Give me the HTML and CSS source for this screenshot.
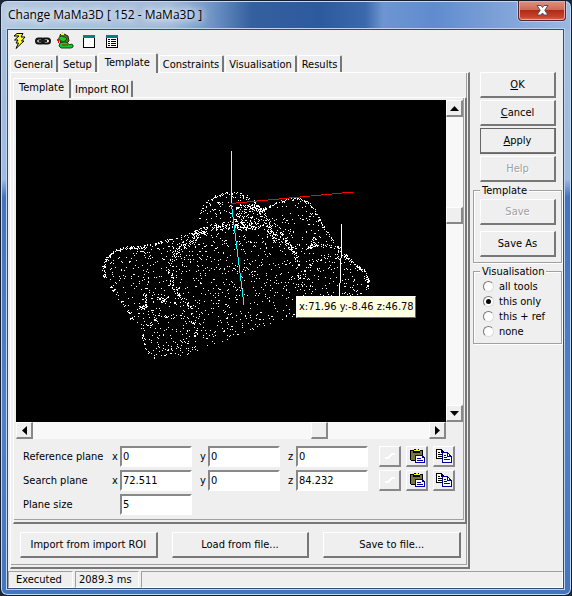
FILE: index.html
```
<!DOCTYPE html>
<html lang="en">
<head>
<meta charset="utf-8">
<title>Change MaMa3D [ 152 - MaMa3D ]</title>
<link rel="stylesheet" href="styles.css">
</head>
<body>
<svg width="0" height="0" class="defs" aria-hidden="true">
  <symbol id="paste" viewBox="0 0 16 16">
    <path fill="#000" d="M1 2h4V1h5v1h4v5h-1v6H2V12H1z"/>
    <path fill="#77773a" d="M2 3h11v9H2z"/>
    <path fill="#000" d="M4 3h7v2H4z"/>
    <path fill="#ff0" d="M5 2h2V1h2v1h2v1H5z"/>
    <path fill="#0000a0" d="M6 7h8v1h1v1h1v6H6z"/>
    <path fill="#fff" d="M7 8h6v2h2v4H7z"/>
    <path fill="#0000a0" d="M8 10h4v1H8zM8 12h6v1H8z"/>
  </symbol>
  <symbol id="copy" viewBox="0 0 16 16">
    <path fill="#000" d="M0 1h6v1h1v1h1v1h1v7H0z"/>
    <path fill="#fff" d="M1 2h4v3h3v5H1z"/>
    <path fill="#000" d="M2 4h2v1H2zM2 6h4v1H2zM2 8h4v1H2z"/>
    <path fill="#0000a0" d="M6 4h6v1h1v1h1v1h1v1h1v7H6z"/>
    <path fill="#fff" d="M7 5h4v4h4v5H7z"/>
    <path fill="#fff" d="M12 6h1v2h-1z"/>
    <path fill="#0000a0" d="M8 7h2v1H8zM8 9h3v1H8zM8 11h6v1H8z"/>
  </symbol>
  <symbol id="plane" viewBox="0 0 16 16">
    <path fill="none" stroke="#fff" stroke-width="2" d="M3 10h3l4-4h3"/>
  </symbol>
</svg>
<header class="titlebar">
  <h1>Change MaMa3D [ 152 - MaMa3D ]</h1>
  <button class="close" aria-label="Close">
    <svg width="13" height="11" viewBox="0 0 13 11"><path fill="#fff" stroke="#46506b" d="M1 .5h4l1.500 2 1.500-2h4L8.800 5.300l3.200 4.700H8L6.500 8 5 10H1l3.200-4.700z"/></svg>
  </button>
</header>
<div class="client">
  <div class="toolbar">
    <button aria-label="Execute"><svg width="16" height="18" viewBox="0 0 16 18"><path fill="#ff3" stroke="#000" d="M5 1.500h6L9 5h4L9.500 9H12L4 16.500 6.500 11H4L6 8H2.500L7 4H2z"/></svg></button>
    <button aria-label="Link"><svg width="16" height="18" viewBox="0 0 16 18"><rect x="1" y="6.500" width="8" height="5" rx="2.500" fill="#aaa" stroke="#111" stroke-width="2"/><rect x="7" y="6.500" width="8" height="5" rx="2.500" fill="none" stroke="#111" stroke-width="2"/><path stroke="#222" stroke-width="2" d="M4 9h8"/></svg></button>
    <button aria-label="Script"><svg width="17" height="18" viewBox="0 0 17 18"><path fill="#6b6b16" stroke="#222" d="M3 3l2-2 2 1 4 2 1 5-3 3H4L3 9z"/><path fill="#1bc52a" stroke="#164b14" d="M1.500 6L4 4l4 1 2 2-2 2-2 1h3l4 3 1-1 2 1v2l-2 1H4l-2-2 1-3 3-1-3-2z"/><path fill="#ff0" d="M4 1h3v2H4z"/><path fill="#f00" d="M0 7h3v1H2v3H1V9H0z"/><path stroke="#6b6b16" stroke-width="2" d="M5 13h6"/></svg></button>
    <button aria-label="Window"><svg width="12" height="13" viewBox="0 0 12 13"><path fill="#000" d="M0 1h12v12H0z"/><path fill="#fff" d="M1 3h10v9H1z"/><path fill="#008080" d="M0 0h12v3H0z"/></svg></button>
    <button aria-label="List"><svg width="12" height="13" viewBox="0 0 12 13"><path fill="#000" d="M0 1h12v12H0z"/><path fill="#fff" d="M1 3h10v9H1z"/><path fill="#008080" d="M0 0h12v3H0z"/><path stroke="#000" d="M2 4.500h2M5 4.500h5M2 6.500h2M5 6.500h5M2 8.500h2M5 8.500h5M2 10.500h2M5 10.500h5"/></svg></button>
  </div>
  <div class="columns">
    <main>
      <div class="tabs" role="tablist">
        <button role="tab">General</button><button role="tab">Setup</button><button role="tab" class="active" aria-selected="true">Template</button><button role="tab">Constraints</button><button role="tab">Visualisation</button><button role="tab">Results</button>
      </div>
      <section class="page outer">
        <div class="tabs inner-tabs" role="tablist">
          <button role="tab" class="active" aria-selected="true">Template</button><button role="tab">Import ROI</button>
        </div>
        <div class="page inner">
          <div class="viewer">
            <div class="scene">
              <svg class="cloud" role="img" aria-label="Point cloud of the template">
                <g transform="translate(-16 -100)" fill="none" shape-rendering="crispEdges">
                  <path id="points" stroke="#fff"/>
                  <path stroke="#ff0" d="M231.500 151v53"/>
                  <path stroke="#f00" d="M231 203.500L353 192"/>
                  <path stroke="#0ff" d="M231.500 205L244 305"/>
                  <path stroke="#fff" d="M341.500 224v22L339.500 296"/>
                </g>
              </svg>
              <output class="tip">x:71.96 y:-8.46 z:46.78</output>
            </div>
            <div class="scroll vertical">
              <button aria-label="Scroll up"><svg width="9" height="5"><path d="M0 5L4.500 0 9 5z"/></svg></button>
              <span class="before"></span><span class="thumb"></span><span class="after"></span>
              <button aria-label="Scroll down"><svg width="9" height="5"><path d="M0 0h9L4.500 5z"/></svg></button>
            </div>
            <div class="scroll horizontal">
              <button aria-label="Scroll left"><svg width="5" height="9"><path d="M5 0v9L0 4.500z"/></svg></button>
              <span class="before"></span><span class="thumb"></span><span class="after"></span>
              <button aria-label="Scroll right"><svg width="5" height="9"><path d="M0 0l5 4.500L0 9z"/></svg></button>
            </div>
          </div>
          <form class="planes">
            <span class="name">Reference plane</span>
            <label for="rx">x</label><input id="rx" value="0">
            <label for="ry">y</label><input id="ry" value="0">
            <label for="rz">z</label><input id="rz" value="0">
            <div class="tools">
              <button type="button" disabled aria-label="Pick"><svg><use href="#plane"/></svg></button>
              <button type="button" aria-label="Paste"><svg><use href="#paste"/></svg></button>
              <button type="button" aria-label="Copy"><svg><use href="#copy"/></svg></button>
            </div>
            <span class="name">Search plane</span>
            <label for="sx">x</label><input id="sx" value="72.511">
            <label for="sy">y</label><input id="sy" value="0">
            <label for="sz">z</label><input id="sz" value="84.232">
            <div class="tools">
              <button type="button" disabled aria-label="Pick"><svg><use href="#plane"/></svg></button>
              <button type="button" aria-label="Paste"><svg><use href="#paste"/></svg></button>
              <button type="button" aria-label="Copy"><svg><use href="#copy"/></svg></button>
            </div>
            <label class="name size" for="ps">Plane size</label><input id="ps" value="5">
          </form>
        </div>
        <div class="files">
          <button class="btn">Import from import ROI</button>
          <button class="btn">Load from file...</button>
          <button class="btn">Save to file...</button>
        </div>
      </section>
    </main>
    <aside>
      <div class="actions">
        <button class="btn"><u>O</u>K</button>
        <button class="btn"><u>C</u>ancel</button>
        <button class="btn default"><u>A</u>pply</button>
        <button class="btn" disabled>Help</button>
      </div>
      <fieldset class="template">
        <legend>Template</legend>
        <button class="btn" disabled>Save</button>
        <button class="btn">Save As</button>
      </fieldset>
      <fieldset class="vis">
        <legend>Visualisation</legend>
        <label><input type="radio" name="vis">all tools</label>
        <label><input type="radio" name="vis" checked>this only</label>
        <label><input type="radio" name="vis">this + ref</label>
        <label><input type="radio" name="vis">none</label>
      </fieldset>
    </aside>
  </div>
  <footer>
    <span>Executed</span><span>2089.3 ms</span><span></span>
  </footer>
</div>
<script src="cloud.js"></script>
</body>
</html>
```
FILE: styles.css
```
* { box-sizing: border-box; }
html { background: #1c2636; }
body {
  margin: 0;
  min-height: 100vh;
  display: flex;
  flex-direction: column;
  padding: 0 7px 6px 6px;
  border: 1px solid #141e30;
  border-radius: 7px;
  box-shadow: inset 0 0 0 1px #c4d9f2;
  background:
    linear-gradient(90deg, #b4c8df 0, #a3bad8 30%, #6f94c6 37%, #34609f 44%, #2d5a9f 56%, #3c69ad 64%, #6e95d2 67%, #5f8ccf 76%, #7fa2d8 88%, #9bb8e2 100%) 0 0 / 100% 29px no-repeat,
    linear-gradient(#a5bedb 0, #9fbbe0 30%, #4474bd 33%, #4f80c8 70%, #4575bd 100%);
  font: 11px/13px "DejaVu Sans Condensed", "DejaVu Sans", sans-serif;
  color: #000;
}
button, input { font: inherit; color: inherit; }
button { padding: 0; }
.defs { position: absolute; }
.titlebar {
  height: 28px;
  flex: none;
  display: flex;
  justify-content: space-between;
  align-items: flex-start;
}
h1 {
  margin: 5px 0 0 1px;
  font: 12px/18px "Open Sans", "Noto Sans", sans-serif;
  text-shadow: 0 0 6px #fff, 0 0 8px #dfeaf7, 0 0 10px #dfeaf7;
}
.close {
  width: 48px;
  height: 20px;
  margin-right: -2px;
  border: 1px solid #5a2430;
  border-top: 0;
  border-radius: 0 0 4px 4px;
  box-shadow: inset 0 0 0 1px #e7a79c, 0 0 0 1px #b4cbea;
  background: linear-gradient(#dd9483 0, #cf6a56 45%, #b02a17 50%, #c9442c 85%, #dd7050 100%);
  display: grid;
  place-items: center;
}
.client {
  flex: 1;
  display: flex;
  flex-direction: column;
  background: #efefef;
  border: 1px solid #2f4d78;
  box-shadow: 0 0 0 1px #bcd4ef;
}
.toolbar { height: 23px; display: flex; align-items: center; padding: 0 3px 1px; gap: 6px; }
.toolbar button { border: 0; background: none; display: grid; place-items: center; min-width: 17px; }
.columns { flex: 1; display: grid; grid-template-columns: 1fr 89px; column-gap: 3px; padding: 0 1px 2px 2px; }
main { display: flex; flex-direction: column; min-width: 0; }
.tabs { display: flex; align-items: flex-end; height: 20px; margin-bottom: -1px; position: relative; flex: none; }
.tabs button {
  height: 17px;
  margin-right: 1px;
  padding: 0 3px;
  background: #efefef;
  border: 1px solid #fff;
  border-right: 2px solid #777;
  border-bottom: 0;
  border-radius: 2px 2px 0 0;
  margin-bottom: 1px;
}
.tabs .active { height: 20px; padding: 0 6px 2px 6px; margin: 0 1px 0 0; }
.page {
  border: solid;
  border-width: 1px 2px 2px 1px;
  border-color: #fff #777 #777 #fff;
  flex: 1;
  display: flex;
  flex-direction: column;
}
.outer { padding: 5px 1px 2px 2px; box-shadow: inset -1px -2px 0 #efefef, inset -2px -3px 0 #a0a0a0; }
.inner-tabs .active { z-index: 1; padding: 0 5px 2px; }
.inner-tabs button { padding: 0 2px; }
.inner { padding: 2px 2px 3px 2px; box-shadow: inset -1px -2px 0 #efefef, inset -2px -3px 0 #a0a0a0; }
.viewer { flex: 1; display: grid; grid-template: 1fr 17px / 1fr 17px; }
.scene { position: relative; background: #000; min-height: 240px; overflow: hidden; }
.cloud { position: absolute; width: 100%; height: 100%; }
.tip {
  position: absolute;
  left: 280px;
  top: 196px;
  padding: 3px 1px 3px 2px;
  line-height: 14px;
  background: #ffffe1;
  border: 1px solid #666;
  border-top-color: #fff;
  border-left-color: #fff;
  white-space: nowrap;
}
.scroll { display: flex; background: #f8f8f8; }
.vertical { flex-direction: column; }
.scroll button, .thumb {
  flex: none;
  width: 17px;
  height: 17px;
  background: #efefef;
  border: 1px solid #fff;
  border-right: 2px solid #888;
  border-bottom: 2px solid #888;
  display: grid;
  place-items: center;
}
.scroll .before, .scroll .after { flex: 90; }
.vertical .after { flex: 180; }
.horizontal .before { flex: 279; }
.horizontal .after { flex: 101; }
.planes {
  display: grid;
  grid-template-columns: 89px 8px 72px 16px 72px 16px 72px 1fr;
  align-items: center;
  row-gap: 3px;
  padding: 7px 8px 4px 7px;
}
.planes input + label { padding-left: 8px; }
.planes .size { grid-column: span 2; }
.planes input {
  width: 100%;
  height: 21px;
  padding: 0 1px;
  border: 2px solid;
  border-color: #888 #fff #fff #888;
  background: #fff;
}
.tools { display: flex; justify-content: flex-end; gap: 5px; }
.tools button {
  width: 22px;
  height: 21px;
  padding: 1px 0 0 2px;
  background: #efefef;
  border: 1px solid #fff;
  border-right: 2px solid #888;
  border-bottom: 2px solid #888;
  display: grid;
  place-items: start;
}
.tools svg { width: 16px; height: 16px; shape-rendering: crispEdges; }
.btn {
  height: 26px;
  background: #efefef;
  border: 1px solid #fff;
  border-right: 2px solid #777;
  border-bottom: 2px solid #777;
}
.btn:disabled { color: #a0a0a0; text-shadow: 1px 1px 0 #fff; }
.default { outline: 1px solid #666; outline-offset: -1px; }
.files { display: grid; grid-template-columns: 1fr 1fr 1fr; gap: 14px; padding: 8px 6px 7px 7px; }
aside { padding-top: 19px; }
.actions { display: grid; gap: 2px; padding: 0 6px 0 7px; }
fieldset { margin: 0; border: 1px solid #a0a0a0; box-shadow: inset 1px 1px 0 #fff, 1px 1px 0 #fff; min-width: 0; }
legend { padding: 0 2px; line-height: 13px; background: #efefef; }
.template { display: grid; gap: 6px; padding: 2px 5px 5px 6px; margin-top: 2px; }
.vis { padding: 1px 5px 4px 6px; margin-top: 2px; }
.vis label { display: flex; align-items: center; gap: 5px; height: 15px; }
.vis input {
  appearance: none;
  margin: 0 0 0 3px;
  width: 11px;
  height: 11px;
  border-radius: 50%;
  border: 1px solid;
  border-color: #777 #ddd #ddd #777;
  background: #fff;
  display: grid;
  place-items: center;
}
.vis input:checked::after { content: ""; width: 5px; height: 5px; border-radius: 50%; background: #000; }
footer { display: flex; gap: 2px; height: 17px; }
footer span { border: 1px solid; border-color: #a0a0a0 #fff #fff #a0a0a0; padding: 1px 7px; width: 65px; }
footer span:nth-child(2) { padding: 1px 3px; width: 64px; }
footer span:last-child { flex: 1; }
```
FILE: cloud.js
```
// Builds the template's point cloud from outlines, rings and filled areas.
let seed = 4711;
const rnd = () => (seed = (seed * 16807) % 2147483647) / 2147483647;
const out = [];
const dot = (x, y) => out.push(`M${Math.round(x)} ${Math.round(y)}.5h1`);

function inside(poly, x, y) {
  let hit = false;
  for (let i = 0, j = poly.length - 1; i < poly.length; j = i++) {
    const [ax, ay] = poly[i], [bx, by] = poly[j];
    if ((ay > y) !== (by > y) && x < (bx - ax) * (y - ay) / (by - ay) + ax) hit = !hit;
  }
  return hit;
}
function fill(poly, n) {
  const xs = poly.map(p => p[0]), ys = poly.map(p => p[1]);
  const x0 = Math.min(...xs), x1 = Math.max(...xs), y0 = Math.min(...ys), y1 = Math.max(...ys);
  while (n > 0) {
    const x = x0 + rnd() * (x1 - x0), y = y0 + rnd() * (y1 - y0);
    if (inside(poly, x, y)) { dot(x, y); n--; }
  }
}
function line(pts, density, spread) {
  for (let i = 1; i < pts.length; i++) {
    const [ax, ay] = pts[i - 1], [bx, by] = pts[i];
    const n = Math.hypot(bx - ax, by - ay) * density;
    for (let k = 0; k < n; k++) {
      const t = rnd();
      dot(ax + (bx - ax) * t + (rnd() - .5) * spread, ay + (by - ay) * t + (rnd() - .5) * spread);
    }
  }
}
function ring(cx, cy, rx, ry, from, to, n, spread) {
  for (let k = 0; k < n; k++) {
    const a = (from + rnd() * (to - from)) * Math.PI / 180, s = (rnd() - .5) * spread;
    dot(cx + (rx + s) * Math.cos(a), cy + (ry + s) * Math.sin(a));
  }
}
function blob(cx, cy, rx, ry, n) {
  for (let k = 0; k < n; k++) {
    const a = rnd() * 2 * Math.PI, r = Math.sqrt(rnd());
    dot(cx + rx * r * Math.cos(a), cy + ry * r * Math.sin(a));
  }
}

const body = [[103, 268], [107, 257], [116, 249], [142, 247], [168, 239], [200, 230], [214, 226], [262, 226],
  [272, 205], [296, 198], [312, 205], [320, 222], [345, 256], [366, 272], [368, 290], [340, 304], [292, 318],
  [255, 329], [215, 343], [178, 355], [155, 359], [145, 350], [142, 332], [132, 319], [115, 290], [104, 277]];
fill(body, 1180);

// ears and head
ring(231, 219, 31, 26, 180, 360, 80, 3);
blob(231, 214, 28, 19, 110);
blob(246, 216, 16, 12, 110);
line([[201, 230], [214, 227], [234, 224], [262, 226]], 2, 7);
line([[243, 203], [262, 211], [271, 232], [276, 242]], 1.7, 5);
line([[262, 210], [280, 201], [297, 198], [306, 201], [315, 210]], 1.3, 2);
line([[315, 210], [320, 222], [331, 239], [347, 258]], .9, 3);
line([[345, 256], [356, 265], [365, 272], [368, 280], [367, 288]], 2, 2);
line([[276, 225], [288, 242], [297, 260]], 1, 4);

// left arm
line([[106, 260], [115, 250], [129, 247], [142, 247]], 1.7, 2);
line([[142, 247], [168, 240], [198, 231]], 1, 3);
line([[107, 257], [103, 268], [105, 277]], 1.6, 3);
line([[111, 286], [122, 302], [133, 320]], .9, 3);
line([[142, 328], [145, 348], [155, 359]], .6, 3);
line([[130, 249], [144, 250], [152, 259]], .5, 3);
line([[178, 250], [198, 237], [205, 228]], 1.6, 7);

// face and snout rings
ring(235, 272, 65, 47, 130, 240, 95, 5);
ring(235, 272, 64, 47, -60, 20, 60, 4);
ring(172, 331, 24, 16, 190, 390, 45, 3);
ring(335, 275, 31, 18, 170, 280, 30, 3);
blob(178, 347, 25, 8, 25);

// eyes
line([[146, 292], [145, 307]], 1.5, 2);
line([[157, 298], [165, 300]], 2.5, 3);
blob(143, 307, 6, 2, 20);
blob(162, 300, 4, 2, 16);
blob(312, 245, 5, 3, 26);
blob(324, 246, 10, 2, 16);
blob(314, 239, 2, 3, 8);
blob(176, 253, 4, 3, 14);

document.getElementById("points").setAttribute("d", out.join(""));
```
